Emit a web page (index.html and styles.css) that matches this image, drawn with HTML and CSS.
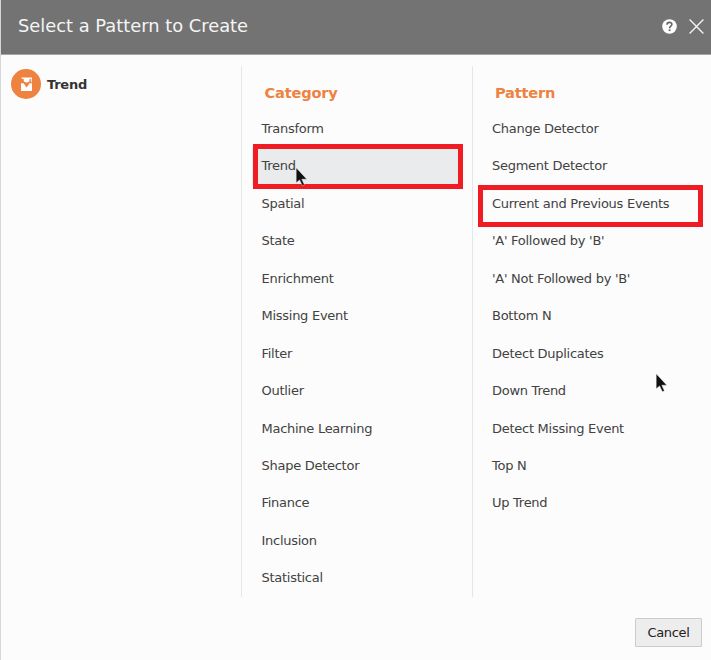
FILE: index.html
```
<!DOCTYPE html>
<html lang="en">
<head>
<meta charset="utf-8">
<title>Select a Pattern to Create</title>
<link rel="stylesheet" href="styles.css">
</head>
<body>
<div class="dialog">
  <header class="titlebar">
    <h1 class="title"><span>Select a Pattern to Create</span></h1>
    <svg class="help" viewBox="0 0 15 15" width="15" height="15"><circle cx="7.5" cy="7.5" r="7.3" fill="#fff"/><path d="M5 5.8C5 2.6 10 2.6 9.9 5.5C9.8 7.2 7.6 7.1 7.6 9.2" fill="none" stroke="#666" stroke-width="1.6"/><rect x="6.7" y="10.3" width="1.8" height="1.8" fill="#666"/></svg>
    <svg class="close" viewBox="0 0 15 15" width="15" height="15"><path d="M.6.6 14.4 14.4M14.4.6.6 14.4" stroke="#f2f2f2" stroke-width="1.4"/></svg>
  </header>
  <main class="columns">
    <section class="summary">
      <svg class="badge" viewBox="0 0 30 30" width="30" height="30"><circle cx="15" cy="15" r="15" fill="#ee8240"/><path d="M10 14.2h2.6L15.6 18.6 18.6 14.2H21V22H10z" fill="#fff"/><path d="M10.5 8.6H21V9.6L18.5 10.2V12.2Q15.6 15 12.8 12.2V10.2L10.5 9.6z" fill="#fff"/><path d="M20.3 9V13.2" stroke="#fff" stroke-width=".9"/></svg>
      <strong class="name">Trend</strong>
    </section>
    <section class="column category">
      <h2>Category</h2>
      <ul>
        <li>Transform</li>
        <li class="selected">Trend</li>
        <li>Spatial</li>
        <li>State</li>
        <li>Enrichment</li>
        <li>Missing Event</li>
        <li>Filter</li>
        <li>Outlier</li>
        <li>Machine Learning</li>
        <li>Shape Detector</li>
        <li>Finance</li>
        <li>Inclusion</li>
        <li>Statistical</li>
      </ul>
    </section>
    <section class="column pattern">
      <h2>Pattern</h2>
      <ul>
        <li>Change Detector</li>
        <li>Segment Detector</li>
        <li>Current and Previous Events</li>
        <li>'A' Followed by 'B'</li>
        <li>'A' Not Followed by 'B'</li>
        <li>Bottom N</li>
        <li>Detect Duplicates</li>
        <li>Down Trend</li>
        <li>Detect Missing Event</li>
        <li>Top N</li>
        <li>Up Trend</li>
      </ul>
    </section>
  </main>
  <footer class="actions"><button type="button">Cancel</button></footer>
  <div class="frame frame-category"></div>
  <div class="frame frame-pattern"></div>
  <svg class="pointer pointer-category" viewBox="0 0 12 20" width="12" height="20"><path d="M.2.8V15.8L3.6 12.9 6.4 18.8 8.4 17.8 5.8 12.2H10.8z" fill="#111" stroke="#fff" stroke-width=".4"/></svg>
  <svg class="pointer pointer-pattern" viewBox="0 0 12 20" width="12" height="20"><path d="M.2.8V15.8L3.6 12.9 6.4 18.8 8.4 17.8 5.8 12.2H10.8z" fill="#111" stroke="#fff" stroke-width=".4"/></svg>
</div>
</body>
</html>
```
FILE: styles.css
```
* { box-sizing: border-box; }
body { margin: 0; font-family: "DejaVu Sans", sans-serif; color: #424242; background: #fcfcfc; }
.dialog { position: relative; width: 711px; height: 660px; border-left: 1px solid #d6d6d6; display: flex; flex-direction: column; overflow: hidden; }
.titlebar { height: 55px; flex: none; display: flex; align-items: center; padding: 0 7px 2px 17px; background: #737373; border-bottom: 1px solid #a5a5a5; color: #f5f5f5; }
.title { flex: 1; margin: 0; font-size: 17.85px; font-weight: 400; line-height: 24px; }
.close { margin-left: 12px; }
.columns { flex: none; height: 531px; margin-top: 11px; display: grid; grid-template-columns: 240px 230.5px 1fr; }
.summary { display: flex; align-items: flex-start; padding: 4px 0 0 10px; }
.badge { margin-top: -1px; }
.name { margin-left: 6px; font-size: 13px; letter-spacing: -.25px; line-height: 30px; color: #333; }
.column { border-left: 1.5px solid #e6e6e6; padding-left: 9.5px; }
.column h2 { margin: 0; padding: 16px 0 0 13px; height: 44px; font-size: 14.6px; letter-spacing: -.2px; line-height: 22px; color: #ee8240; }
.column ul { margin: 0; padding: 0; list-style: none; }
.column li { height: 37.45px; line-height: 37.45px; padding-left: 10px; font-size: 13px; letter-spacing: -.27px; white-space: nowrap; }
.column .selected { background: #eaebed; margin-right: 10px; }
.actions { display: flex; justify-content: flex-end; padding: 21px 9px 0 0; }
button { width: 67px; height: 29px; padding: 0; border: 1px solid #ccc; border-radius: 1px; background: #ededed; color: #222; font: 13px "DejaVu Sans", sans-serif; letter-spacing: -.3px; }
.frame { position: absolute; border: 5px solid #ef1c24; }
.frame-category { left: 252px; top: 144px; width: 210px; height: 45px; }
.frame-pattern { left: 477px; top: 185px; width: 225px; height: 42px; }
.pointer { position: absolute; }
.pointer-category { left: 295px; top: 167px; }
.pointer-pattern { left: 655px; top: 373px; }
```
